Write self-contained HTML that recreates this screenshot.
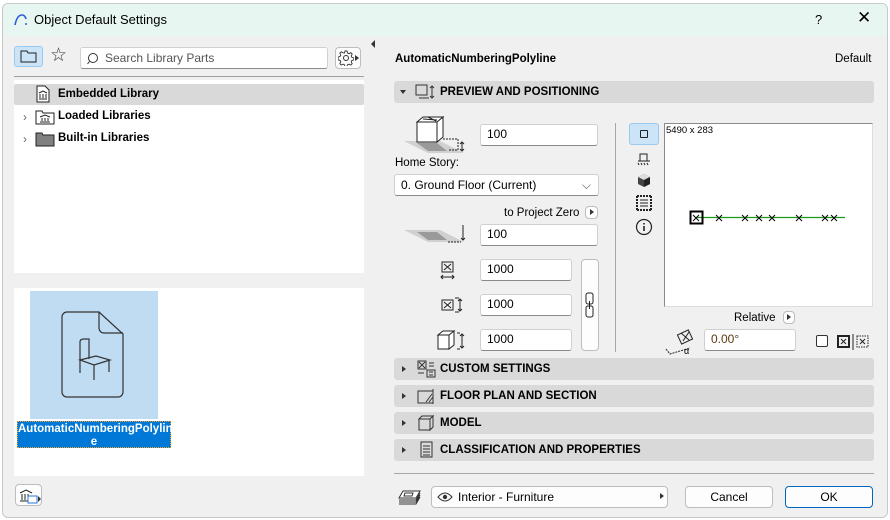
<!DOCTYPE html>
<html><head><style>
*{box-sizing:border-box;margin:0;padding:0}
body{width:890px;height:520px;background:#fff;font-family:"Liberation Sans",sans-serif;font-size:12px;color:#000;position:relative;overflow:hidden}
.a{position:absolute}
.win{left:2px;top:3px;width:886px;height:515px;border:1px solid #c8c8c8;border-radius:6px;background:#f0f0f0;overflow:hidden}
.tb{left:0;top:0;width:884px;height:32px;background:#e8f6f2}
.in{position:absolute;background:#fff;border:1px solid #d0d0d0;border-bottom:1px solid #8a8a8a;border-radius:3px;font-size:12px;padding-left:6px;line-height:19px}
.hd{position:absolute;left:391px;width:480px;height:22px;background:#d9d9d9;border-radius:3px;font-weight:bold;font-size:11.5px;line-height:22px}
.hd .t{position:absolute;left:46px}
.hd .tri{position:absolute;left:8px;top:8px;width:0;height:0;border-top:3.5px solid transparent;border-bottom:3.5px solid transparent;border-left:4px solid #333}
.btn{position:absolute;background:#fdfdfd;border:1px solid #bdbdbd;border-radius:4px;text-align:center;line-height:19px}
</style></head><body>
<div class="a win">
<div class="a tb"></div>
<svg class="a" style="left:10px;top:9px" width="16" height="14"><path d="M2 12 Q4 2 9 2 Q12 2 13 6" fill="none" stroke="#2c5fd6" stroke-width="1.6"/><circle cx="13" cy="11" r="1" fill="#2c5fd6"/></svg>
<div class="a" style="left:31px;top:8px;font-size:13px">Object Default Settings</div>
<div class="a" style="left:812px;top:8px;font-size:13px">?</div>
<div class="a" style="left:854px;top:4px;font-size:17px">✕</div>

<div class="a" style="left:11px;top:42px;width:29px;height:21px;background:#cce4f7;border:1px solid #99c9ef;border-radius:3px"></div>
<svg class="a" style="left:17px;top:46px" width="17" height="13"><path d="M1 1h6l1 2h8v9H1z" fill="none" stroke="#222"/></svg>
<div class="a" style="left:47px;top:40px;font-size:19px;color:#333">☆</div>
<div class="in" style="left:77px;top:43px;width:248px;height:22px;color:#555;padding-left:24px;line-height:20px">Search Library Parts</div>
<svg class="a" style="left:84px;top:48px" width="13" height="13"><circle cx="6" cy="6" r="4.5" fill="none" stroke="#333"/><path d="M2.5 9.5 0.5 12" stroke="#333"/></svg>
<div class="btn" style="left:332px;top:43px;width:26px;height:22px"></div>
<svg class="a" style="left:335px;top:46px" width="16" height="16"><circle cx="8" cy="8" r="2.5" fill="none" stroke="#333"/><path d="M7 1h2l.5 2 1.5.7 1.8-1 1.4 1.4-1 1.8.7 1.5 2 .5v2l-2 .5-.7 1.5 1 1.8-1.4 1.4-1.8-1-1.5.7-.5 2H7l-.5-2-1.5-.7-1.8 1-1.4-1.4 1-1.8-.7-1.5-2-.5V7l2-.5.7-1.5-1-1.8 1.4-1.4 1.8 1L6.5 3z" fill="none" stroke="#333" stroke-width=".9"/></svg>
<div class="a" style="left:352px;top:51px;border-top:3px solid transparent;border-bottom:3px solid transparent;border-left:4px solid #333"></div>
<div class="a" style="left:368px;top:36px;border-top:4px solid transparent;border-bottom:4px solid transparent;border-right:4px solid #333"></div>
<div class="a" style="left:11px;top:72px;width:350px;height:1px;background:#a0a0a0"></div>
<div class="a" style="left:11px;top:76px;width:350px;height:193px;background:#fff"></div>
<div class="a" style="left:11px;top:80px;width:350px;height:21px;background:#d9d9d9;border-radius:2px"></div>
<svg class="a" style="left:33px;top:81px" width="14" height="18"><path d="M1 1h8l4 4v12H1z" fill="#fff" stroke="#222"/><path d="M3 14h8M4 9v4M7 9v4M10 9v4M3 8l4-2 4 2" stroke="#222" fill="none"/></svg>
<div class="a" style="left:55px;top:84px;font-weight:bold;font-size:11.5px">Embedded Library</div>
<div class="a" style="left:20px;top:106px;color:#666;font-size:12px">›</div>
<svg class="a" style="left:32px;top:106px" width="20" height="15"><path d="M1 1h6l1 2h11v11H1z" fill="#fff" stroke="#222"/><path d="M5 12h10M7 8v3M10 8v3M13 8v3M5 7l5-2 5 2" stroke="#222" fill="none"/></svg>
<div class="a" style="left:55px;top:106px;font-weight:bold;font-size:11.5px">Loaded Libraries</div>
<div class="a" style="left:20px;top:128px;color:#666;font-size:12px">›</div>
<svg class="a" style="left:32px;top:128px" width="20" height="15"><path d="M1 1h6l1 2h11v11H1z" fill="#808080" stroke="#222"/></svg>
<div class="a" style="left:55px;top:128px;font-weight:bold;font-size:11.5px">Built-in Libraries</div>

<div class="a" style="left:11px;top:284px;width:350px;height:188px;background:#fff"></div>
<div class="a" style="left:27px;top:287px;width:128px;height:128px;background:#bfdcf3"></div>
<svg class="a" style="left:58px;top:307px" width="66" height="88"><path d="M6 1h32l24 22v58a5 5 0 0 1-5 5H6a5 5 0 0 1-5-5V6a5 5 0 0 1 5-5z M38 1v16a5 5 0 0 0 5 5h19" fill="none" stroke="#333" stroke-width="1.2"/><path d="M19 62V31q0-3 4-3h5v20M19 49l16-4 14 4-16 5zM33 54v15M48 49v12" fill="none" stroke="#333" stroke-width="1.2"/></svg>
<div class="a" style="left:14px;top:417px;width:154px;height:27px;background:#0078d7;color:#fff;font-weight:bold;font-size:11.5px;text-align:center;line-height:13px;padding-top:1px;border:1px dotted #f0a030">AutomaticNumberingPolylin<br>e</div>
<div class="btn" style="left:12px;top:480px;width:27px;height:22px"></div>
<svg class="a" style="left:15px;top:484px" width="24" height="16"><path d="M2 13h12M4 6v6M7 6v6M10 6v6M2 5l6-3 6 3" stroke="#222" fill="none"/><rect x="10" y="8" width="9" height="7" fill="#fff" stroke="#2b74d8"/><path d="M20 8l3 3-3 3z" fill="#333"/></svg>

<div class="a" style="left:392px;top:49px;font-weight:bold;font-size:11.5px">AutomaticNumberingPolyline</div>
<div class="a" style="left:832px;top:49px;font-size:11.5px">Default</div>
<div class="hd" style="top:77px"><div class="tri" style="left:6px;top:9px;border-left:3.5px solid transparent;border-right:3.5px solid transparent;border-top:4px solid #333;border-bottom:0"></div><span class="t">PREVIEW AND POSITIONING</span></div>
<svg class="a" style="left:412px;top:80px" width="22" height="17"><rect x="1" y="1" width="11" height="10" fill="none" stroke="#333"/><path d="M4 14h10M17 2v12M15 4l2-2 2 2M15 12l2 2 2-2" stroke="#333" fill="none"/></svg>

<svg class="a" style="left:399px;top:110px" width="66" height="42"><path d="M2 27h36l24 12H26z" fill="#d0d0d0"/><path d="M15 29h20l10 8H26z" fill="#9a9a9a"/><path d="M15 8l6-5h20l-6 5z M15 8h20v20H15z M35 8l6-5v20l-6 5z" fill="#fff" stroke="#222"/><path d="M21 5l14 1M26 3l8 4" stroke="#222"/><path d="M41 25h15v11h-10" fill="none" stroke="#222" stroke-dasharray="2 1"/><path d="M60 28v9M58 30l2-2 2 2M58 35l2 2 2-2" stroke="#222" fill="none"/></svg>
<div class="in" style="left:477px;top:120px;width:118px;height:22px">100</div>
<div class="a" style="left:392px;top:153px;font-size:11.5px">Home Story:</div>
<div class="in" style="left:391px;top:170px;width:205px;height:22px;line-height:20px">0. Ground Floor (Current)<span style="position:absolute;right:7px;top:0;color:#555">⌵</span></div>
<div class="a" style="left:501px;top:203px;font-size:11.5px">to Project Zero</div>
<div class="btn" style="left:582px;top:202px;width:13px;height:13px"></div>
<div class="a" style="left:587px;top:205px;border-top:3.5px solid transparent;border-bottom:3.5px solid transparent;border-left:4px solid #333"></div>
<svg class="a" style="left:399px;top:218px" width="66" height="26"><path d="M2 8h36l24 12H26z" fill="#d0d0d0"/><path d="M15 10h20l10 8H26z" fill="#9a9a9a"/><path d="M46 20h13" stroke="#222" stroke-dasharray="2 1"/><path d="M61 3v15M59 16l2 2 2-2" stroke="#222" fill="none"/></svg>
<div class="in" style="left:477px;top:220px;width:118px;height:22px">100</div>
<svg class="a" style="left:437px;top:256px" width="16" height="22"><rect x="2" y="2" width="11" height="10" fill="none" stroke="#222"/><path d="M4 4l7 6M11 4l-7 6M1 17h13M3 15l-2 2 2 2M12 15l2 2-2 2" stroke="#222" fill="none"/></svg>
<div class="in" style="left:477px;top:255px;width:92px;height:22px">1000</div>
<svg class="a" style="left:437px;top:292px" width="26" height="18"><rect x="2" y="4" width="11" height="10" fill="none" stroke="#222"/><path d="M4 6l7 6M11 6l-7 6M15 2h4M15 16h4M20 3v12M18 5l2-2 2 2M18 13l2 2 2-2" stroke="#222" fill="none"/></svg>
<div class="in" style="left:477px;top:290px;width:92px;height:22px">1000</div>
<svg class="a" style="left:432px;top:325px" width="32" height="24"><path d="M3 6l5-4h11l-5 4zM3 6h11v14H3zM14 6l5-4v14l-5 4z" fill="#fff" stroke="#222"/><path d="M22 4h3M22 20h3M27 5v14M25 7l2-2 2 2M25 17l2 2 2-2" stroke="#222" fill="none"/></svg>
<div class="in" style="left:477px;top:325px;width:92px;height:22px">1000</div>
<div class="btn" style="left:578px;top:255px;width:18px;height:92px"></div>
<svg class="a" style="left:581px;top:288px" width="12" height="26"><rect x="2" y="1" width="7" height="11" rx="2" fill="none" stroke="#222"/><rect x="2" y="14" width="7" height="11" rx="2" fill="none" stroke="#222"/><path d="M5.5 9v8" stroke="#222"/></svg>
<div class="a" style="left:612px;top:119px;width:1px;height:229px;background:#a8a8a8"></div>

<div class="a" style="left:626px;top:119px;width:30px;height:22px;background:#cce4f7;border:1px solid #99c9ef;border-radius:3px"></div>
<div class="a" style="left:637px;top:126px;width:8px;height:8px;border:1.3px solid #222;border-radius:1px"></div>
<svg class="a" style="left:633px;top:148px" width="16" height="14"><path d="M4 9V2h7v7M2 9h12" fill="none" stroke="#222"/><path d="M2 11l1 2M5 11l1 2M8 11l1 2M11 11l1 2" stroke="#222"/></svg>
<svg class="a" style="left:634px;top:169px" width="14" height="15"><path d="M7 1l6 3v7l-6 3-6-3V4z" fill="#444"/><path d="M1 4l6-3 6 3-6 3z" fill="#ddd"/><path d="M7 7l6-3v7l-6 3z" fill="#222"/></svg>
<svg class="a" style="left:633px;top:191px" width="16" height="16"><path d="M1 1v14M15 1v14M1 1h14M1 15h14" stroke="#222" fill="none" stroke-width="2" stroke-dasharray="2 1"/><path d="M4 5h8M4 8h8M4 11h8" stroke="#222"/></svg>
<svg class="a" style="left:632px;top:214px" width="18" height="18"><circle cx="9" cy="9" r="7.5" fill="none" stroke="#222" stroke-width="1.2"/><path d="M9 8v5M9 5v1.5" stroke="#222" stroke-width="1.6"/></svg>

<div class="a" style="left:661px;top:119px;width:209px;height:184px;background:#fff;border:1px solid #8a8a8a;border-right-color:#ddd;border-bottom-color:#ddd"></div>
<div class="a" style="left:663px;top:121px;font-size:9.5px">5490 x 283</div>
<svg class="a" style="left:686px;top:205px" width="160" height="18"><path d="M8 8.5h148" stroke="#1a9a1a" stroke-width="1.2"/><rect x="1.5" y="2.5" width="12" height="12" fill="none" stroke="#000" stroke-width="2"/><g stroke="#000" fill="none"><path d="M4 6l6 6M10 6l-6 6"/><path d="M27 6l6 6M33 6l-6 6"/><path d="M53 6l6 6M59 6l-6 6"/><path d="M67 6l6 6M73 6l-6 6"/><path d="M80 6l6 6M86 6l-6 6"/><path d="M107 6l6 6M113 6l-6 6"/><path d="M133 6l6 6M139 6l-6 6"/><path d="M142 6l6 6M148 6l-6 6"/></g></svg>
<div class="a" style="left:731px;top:308px;font-size:11.5px">Relative</div>
<div class="btn" style="left:780px;top:307px;width:12px;height:13px"></div>
<div class="a" style="left:784px;top:310px;border-top:3.5px solid transparent;border-bottom:3.5px solid transparent;border-left:4px solid #333"></div>
<svg class="a" style="left:662px;top:325px" width="32" height="26"><rect x="14" y="3" width="12" height="10" transform="rotate(-25 20 8)" fill="none" stroke="#222"/><path d="M16 4l8 7M24 3l-6 9" stroke="#222"/><path d="M1 20l4 5 20-6" fill="none" stroke="#222" stroke-dasharray="2 1"/><text x="19" y="25" font-size="9" font-family="Liberation Sans">α</text></svg>
<div class="in" style="left:701px;top:325px;width:92px;height:22px;color:#5a3a10">0.00°</div>
<div class="a" style="left:813px;top:331px;width:12px;height:12px;border:1px solid #333;border-radius:2px;background:#fff"></div>
<svg class="a" style="left:833px;top:330px" width="36" height="16"><rect x="2" y="2" width="11" height="11" fill="none" stroke="#222" stroke-width="2"/><path d="M5 5l5 5M10 5l-5 5M17 0v16" stroke="#222"/><rect x="21" y="2" width="11" height="11" fill="none" stroke="#222" stroke-dasharray="1.5 1"/><path d="M24 5l5 5M29 5l-5 5" stroke="#222"/></svg>

<div class="hd" style="top:354px"><div class="tri"></div><span class="t">CUSTOM SETTINGS</span></div>
<svg class="a" style="left:414px;top:356px" width="20" height="18"><rect x="1" y="1" width="8" height="8" fill="none" stroke="#333"/><path d="M2 2l6 6M8 2l-6 6M12 3h5M12 6h5M1 13h6M10 10h8v7h-8zM12 12h4M12 15h4" stroke="#333" fill="none"/></svg>
<div class="hd" style="top:381px"><div class="tri"></div><span class="t">FLOOR PLAN AND SECTION</span></div>
<svg class="a" style="left:414px;top:384px" width="20" height="17"><rect x="1" y="3" width="15" height="12" fill="none" stroke="#333"/><path d="M16 1v15M9 14l6-8M12 14l4-5" stroke="#333"/></svg>
<div class="hd" style="top:408px"><div class="tri"></div><span class="t">MODEL</span></div>
<svg class="a" style="left:414px;top:410px" width="18" height="18"><path d="M2 5l3-3h11l-3 3zM2 5h11v11H2zM13 5l3-3v11l-3 3z" fill="none" stroke="#333"/></svg>
<div class="hd" style="top:435px"><div class="tri"></div><span class="t">CLASSIFICATION AND PROPERTIES</span></div>
<svg class="a" style="left:417px;top:437px" width="14" height="18"><rect x="1" y="1" width="11" height="15" fill="none" stroke="#333"/><path d="M3 5h7M3 8h7M3 11h7M3 14h7" stroke="#333"/></svg>
<div class="a" style="left:391px;top:469px;width:480px;height:1px;background:#a8a8a8"></div>
<svg class="a" style="left:395px;top:486px" width="24" height="16"><path d="M5 1h17l-4 7H1z" fill="#fff" stroke="#333"/><path d="M1 10h17l4-7M1 12h17l4-7M1 14h17l4-7" fill="none" stroke="#333"/><path d="M7 3h8l-1 3H6z" fill="none" stroke="#333"/></svg>
<div class="btn" style="left:428px;top:482px;width:237px;height:22px;text-align:left;padding-left:26px;line-height:20px">Interior - Furniture</div>
<svg class="a" style="left:434px;top:488px" width="16" height="10"><path d="M1 5q7-8 14 0q-7 8-14 0z" fill="none" stroke="#333"/><circle cx="8" cy="5" r="2.2" fill="#333"/></svg>
<div class="a" style="left:657px;top:489px;border-top:3.5px solid transparent;border-bottom:3.5px solid transparent;border-left:4px solid #333"></div>
<div class="btn" style="left:682px;top:482px;width:88px;height:22px;line-height:20px">Cancel</div>
<div class="btn" style="left:782px;top:482px;width:88px;height:22px;line-height:20px;border-color:#0067c0">OK</div>
</div>
</body></html>
